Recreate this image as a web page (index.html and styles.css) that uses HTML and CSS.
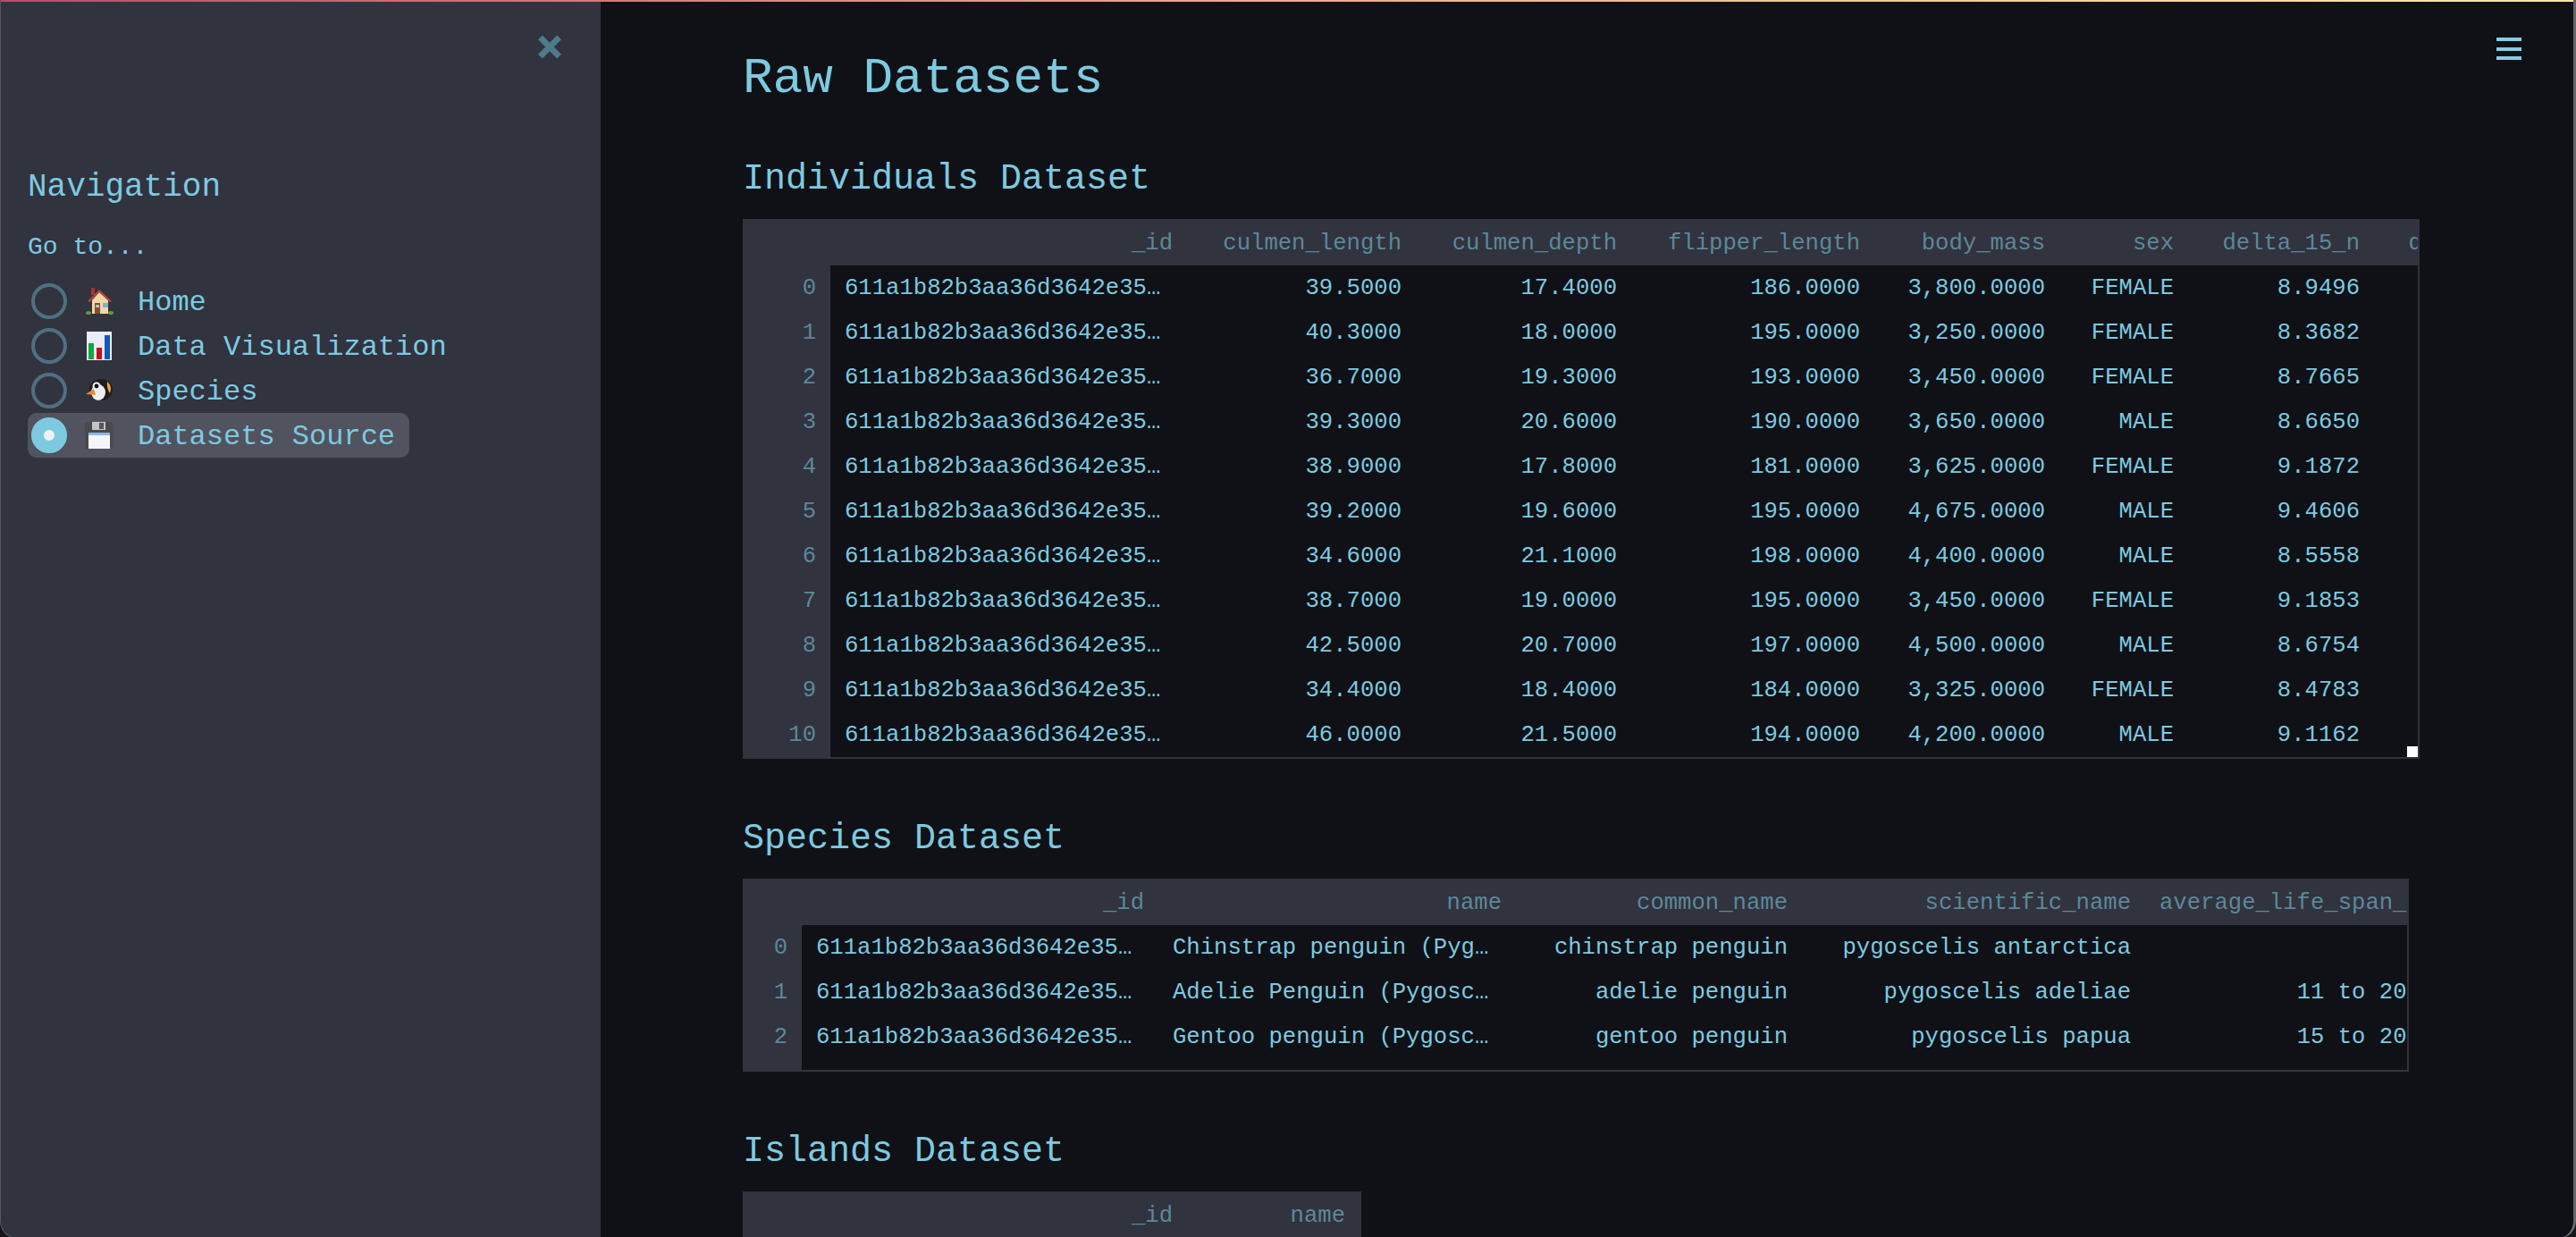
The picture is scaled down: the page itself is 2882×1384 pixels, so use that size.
FILE: index.html
```html
<!DOCTYPE html>
<html lang="en">
<head>
  <meta charset="UTF-8" />
  <title>Raw Datasets</title>
  <link rel="stylesheet" href="styles.css">
</head>
<body>

<div class="top-line"></div>
<div class="window-edge"></div>

<div class="app">
  <aside class="sidebar">
    <div class="close-row">
      <svg class="close-icon" viewBox="0 0 28 28"><path d="M3 3 L25 25 M25 3 L3 25"/></svg>
    </div>
    <h2 class="nav-title">Navigation</h2>
    <div class="nav-label">Go to...</div>
    <div class="nav-list">
      <div class="nav-item">
        <span class="radio"></span>
        <svg class="emoji" viewBox="0 0 32 32">
          <rect x="7" y="1" width="4" height="8" fill="#a5372c"/>
          <path d="M8 15 L16 6 L26 15 V30 H8 Z" fill="#f3d6a6"/>
          <path d="M3 16 L16 3 L30 16 L28 17 L16 6 L5 17 Z" fill="#b8443a"/>
          <rect x="11" y="18" width="6" height="12" fill="#8a4b2a"/>
          <rect x="12" y="20" width="4" height="3" fill="#9fc4dc"/>
          <rect x="20" y="18" width="6" height="5" fill="#7fb0d6"/>
          <ellipse cx="4" cy="29" rx="3" ry="2" fill="#5d9b3c"/>
          <ellipse cx="29" cy="29" rx="3" ry="2" fill="#5d9b3c"/>
        </svg>
        <span class="nav-text">Home</span>
      </div>
      <div class="nav-item">
        <span class="radio"></span>
        <svg class="emoji" viewBox="0 0 32 32">
          <rect x="2" y="0" width="28" height="32" fill="#e9eef6"/>
          <rect x="4" y="13" width="6" height="18" fill="#12a83c"/>
          <rect x="13" y="18" width="6" height="13" fill="#c4101c"/>
          <rect x="22" y="4" width="6" height="27" fill="#1458b8"/>
        </svg>
        <span class="nav-text">Data Visualization</span>
      </div>
      <div class="nav-item">
        <span class="radio"></span>
        <svg class="emoji" viewBox="0 0 32 32">
          <ellipse cx="18" cy="15" rx="13" ry="12" fill="#1d1d20"/>
          <ellipse cx="15" cy="18" rx="8" ry="9" fill="#eeeeee"/>
          <path d="M25 6 Q31 11 28 19 Q24 13 25 6 Z" fill="#f0a630"/>
          <circle cx="13" cy="11" r="4.5" fill="#f4f4f4"/>
          <circle cx="13" cy="11" r="2.4" fill="#111"/>
          <path d="M10 14 L1 20 L12 21 Z" fill="#e08a3a"/>
        </svg>
        <span class="nav-text">Species</span>
      </div>
      <div class="nav-item selected">
        <span class="radio"></span>
        <svg class="emoji" viewBox="0 0 32 32">
          <path d="M0 1 H29 L32 4 V31 H0 Z" fill="#4a4a4e"/>
          <rect x="8" y="1" width="15" height="9" fill="#c4c4c4"/>
          <rect x="16" y="2" width="5" height="7" fill="#55555a"/>
          <rect x="4" y="13" width="24" height="18" fill="#f4f6f8"/>
          <rect x="4" y="13" width="24" height="3" fill="#8fb8e4"/>
        </svg>
        <span class="nav-text">Datasets Source</span>
      </div>
    </div>
  </aside>

  <main class="content">
    <div class="menu-btn"><span></span><span></span><span></span></div>

    <h1 class="page-title">Raw Datasets</h1>

    <h2 class="section-title">Individuals Dataset</h2>
    <div class="frame frame-individuals">
      <table>
        <colgroup>
          <col class="w98"><col class="w399"><col class="w256"><col class="w241"><col class="w272"><col class="w207"><col class="w144"><col class="w208"><col class="w208">
        </colgroup>
        <thead>
          <tr><th></th><th>_id</th><th>culmen_length</th><th>culmen_depth</th><th>flipper_length</th><th>body_mass</th><th>sex</th><th>delta_15_n</th><th>delta_13_c</th></tr>
        </thead>
        <tbody>
          <tr><th>0</th><td class="id">611a1b82b3aa36d3642e35…</td><td>39.5000</td><td>17.4000</td><td>186.0000</td><td>3,800.0000</td><td>FEMALE</td><td>8.9496</td><td></td></tr>
          <tr><th>1</th><td class="id">611a1b82b3aa36d3642e35…</td><td>40.3000</td><td>18.0000</td><td>195.0000</td><td>3,250.0000</td><td>FEMALE</td><td>8.3682</td><td></td></tr>
          <tr><th>2</th><td class="id">611a1b82b3aa36d3642e35…</td><td>36.7000</td><td>19.3000</td><td>193.0000</td><td>3,450.0000</td><td>FEMALE</td><td>8.7665</td><td></td></tr>
          <tr><th>3</th><td class="id">611a1b82b3aa36d3642e35…</td><td>39.3000</td><td>20.6000</td><td>190.0000</td><td>3,650.0000</td><td>MALE</td><td>8.6650</td><td></td></tr>
          <tr><th>4</th><td class="id">611a1b82b3aa36d3642e35…</td><td>38.9000</td><td>17.8000</td><td>181.0000</td><td>3,625.0000</td><td>FEMALE</td><td>9.1872</td><td></td></tr>
          <tr><th>5</th><td class="id">611a1b82b3aa36d3642e35…</td><td>39.2000</td><td>19.6000</td><td>195.0000</td><td>4,675.0000</td><td>MALE</td><td>9.4606</td><td></td></tr>
          <tr><th>6</th><td class="id">611a1b82b3aa36d3642e35…</td><td>34.6000</td><td>21.1000</td><td>198.0000</td><td>4,400.0000</td><td>MALE</td><td>8.5558</td><td></td></tr>
          <tr><th>7</th><td class="id">611a1b82b3aa36d3642e35…</td><td>38.7000</td><td>19.0000</td><td>195.0000</td><td>3,450.0000</td><td>FEMALE</td><td>9.1853</td><td></td></tr>
          <tr><th>8</th><td class="id">611a1b82b3aa36d3642e35…</td><td>42.5000</td><td>20.7000</td><td>197.0000</td><td>4,500.0000</td><td>MALE</td><td>8.6754</td><td></td></tr>
          <tr><th>9</th><td class="id">611a1b82b3aa36d3642e35…</td><td>34.4000</td><td>18.4000</td><td>184.0000</td><td>3,325.0000</td><td>FEMALE</td><td>8.4783</td><td></td></tr>
          <tr><th>10</th><td class="id">611a1b82b3aa36d3642e35…</td><td>46.0000</td><td>21.5000</td><td>194.0000</td><td>4,200.0000</td><td>MALE</td><td>9.1162</td><td></td></tr>
        </tbody>
      </table>
      <div class="resize-handle"></div>
    </div>

    <h2 class="section-title">Species Dataset</h2>
    <div class="frame frame-species">
      <table>
        <colgroup>
          <col class="w66"><col class="w399"><col class="w400"><col class="w320"><col class="w384"><col class="w354">
        </colgroup>
        <thead>
          <tr><th></th><th>_id</th><th>name</th><th>common_name</th><th>scientific_name</th><th>average_life_span_yrs</th></tr>
        </thead>
        <tbody>
          <tr><th>0</th><td class="id">611a1b82b3aa36d3642e35…</td><td class="id">Chinstrap penguin (Pyg…</td><td>chinstrap penguin</td><td>pygoscelis antarctica</td><td></td></tr>
          <tr><th>1</th><td class="id">611a1b82b3aa36d3642e35…</td><td class="id">Adelie Penguin (Pygosc…</td><td>adelie penguin</td><td>pygoscelis adeliae</td><td class="life">11 to 20 yrs</td></tr>
          <tr><th>2</th><td class="id">611a1b82b3aa36d3642e35…</td><td class="id">Gentoo penguin (Pygosc…</td><td>gentoo penguin</td><td>pygoscelis papua</td><td class="life">15 to 20 yrs</td></tr>
          <tr class="spacer"><th></th><td colspan="5"></td></tr>
        </tbody>
      </table>
    </div>

    <h2 class="section-title">Islands Dataset</h2>
    <div class="frame frame-islands">
      <table>
        <colgroup>
          <col class="w98"><col class="w399"><col class="w195">
        </colgroup>
        <thead>
          <tr><th></th><th>_id</th><th>name</th></tr>
        </thead>
      </table>
    </div>
  </main>
</div>

</body>
</html>
```

FILE: styles.css
```css
html, body {
  margin: 0;
  height: 100%;
  overflow: hidden;
}

body {
  font-family: "Liberation Mono", monospace;
  background: #0f1116;
  color: #7dcae0;
  position: relative;
}

.top-line {
  position: absolute;
  top: 0;
  left: 0;
  right: 0;
  height: 2px;
  background: linear-gradient(90deg, #c8456a, #e8a58c 45%, #fde9a0);
  z-index: 2;
}

/* thin window border with rounded bottom corners */
.window-edge {
  position: absolute;
  top: 0;
  left: 0;
  right: 0;
  bottom: -2px;
  border-left: 1px solid #55565e;
  border-right: 3px solid #66676c;
  border-bottom: 1px solid #55565e;
  border-radius: 0 0 20px 20px;
  box-shadow: 0 0 0 20px #16161a;
  pointer-events: none;
  z-index: 3;
}

.app {
  display: flex;
  height: 1384px;
}

/* sidebar */
.sidebar {
  width: 672px;
  flex-shrink: 0;
  background: #31333f;
  box-sizing: border-box;
  padding: 39px 0 0 31px;
}

.close-row {
  display: flex;
  justify-content: flex-end;
  padding-right: 43px;
}

.close-icon {
  width: 28px;
  height: 27px;
  stroke: #4f7a8c;
  stroke-width: 7;
  fill: none;
  display: block;
}

.nav-title {
  font-size: 36px;
  font-weight: normal;
  line-height: 46px;
  margin: 121px 0 0 0;
}

.nav-label {
  font-size: 28px;
  line-height: 36px;
  margin-top: 26px;
}

.nav-list {
  margin-top: 17px;
  display: flex;
  flex-direction: column;
  align-items: flex-start;
}

.nav-item {
  display: flex;
  align-items: center;
  height: 50px;
  padding-right: 16px;
  font-size: 32px;
  border-radius: 10px;
}

.nav-item.selected {
  background: #51535f;
}

.radio {
  width: 40px;
  height: 40px;
  box-sizing: border-box;
  border: 4px solid #4f7080;
  border-radius: 50%;
  margin-left: 4px;
  flex-shrink: 0;
}

.nav-item.selected .radio {
  border: 14px solid #7dcae0;
  background: #eef2f6;
}

.emoji {
  width: 32px;
  height: 32px;
  margin-left: 20px;
  flex-shrink: 0;
}

.nav-text {
  margin-left: 27px;
  padding-top: 2px;
}

/* main area */
.content {
  flex: 1;
  position: relative;
  padding-left: 159px;
  overflow: hidden;
}

.menu-btn {
  position: absolute;
  top: 42px;
  right: 61px;
  width: 28px;
  height: 25px;
  display: flex;
  flex-direction: column;
  justify-content: space-between;
}

.menu-btn span {
  display: block;
  height: 4px;
  background: #86cde2;
}

.page-title {
  font-size: 56px;
  font-weight: normal;
  line-height: 72px;
  margin: 52px 0 0 0;
}

.section-title {
  font-size: 40px;
  font-weight: normal;
  line-height: 52px;
  margin: 0;
  padding-top: 3px;
}

.page-title + .section-title {
  margin-top: 48px;
}

.frame {
  position: relative;
  overflow: hidden;
  box-sizing: border-box;
  margin: 18px 0 61px 0;
  border-right: 2px solid #31333f;
  border-bottom: 2px solid #31333f;
}

.frame-individuals { width: 1876px; }
.frame-species { width: 1864px; }
.frame-islands { width: 692px; border-right: 0; }

.frame-islands thead th:last-child {
  padding-right: 18px;
}

table {
  border-collapse: collapse;
  table-layout: fixed;
  width: 1px;
  font-size: 25.6px;
}

col.w66 { width: 66px; }
col.w98 { width: 98px; }
col.w144 { width: 144px; }
col.w195 { width: 195px; }
col.w207 { width: 207px; }
col.w208 { width: 208px; }
col.w241 { width: 241px; }
col.w256 { width: 256px; }
col.w272 { width: 272px; }
col.w320 { width: 320px; }
col.w354 { width: 354px; }
col.w384 { width: 384px; }
col.w399 { width: 399px; }
col.w400 { width: 400px; }

th, td {
  height: 50px;
  padding: 1px 16px 0 16px;
  text-align: right;
  font-weight: normal;
  white-space: nowrap;
  overflow: hidden;
  box-sizing: border-box;
}

thead th {
  height: 52px;
  padding-top: 2px;
  background: #31333f;
  color: #5c8899;
}

tbody th {
  background: #31333f;
  color: #5c8899;
}

td.id {
  text-align: left;
}

td.life {
  padding-right: 0;
}

.spacer th, .spacer td {
  height: 12px;
  padding: 0;
}

.resize-handle {
  position: absolute;
  right: 0;
  bottom: 0;
  width: 12px;
  height: 12px;
  background: #fff;
}
```
